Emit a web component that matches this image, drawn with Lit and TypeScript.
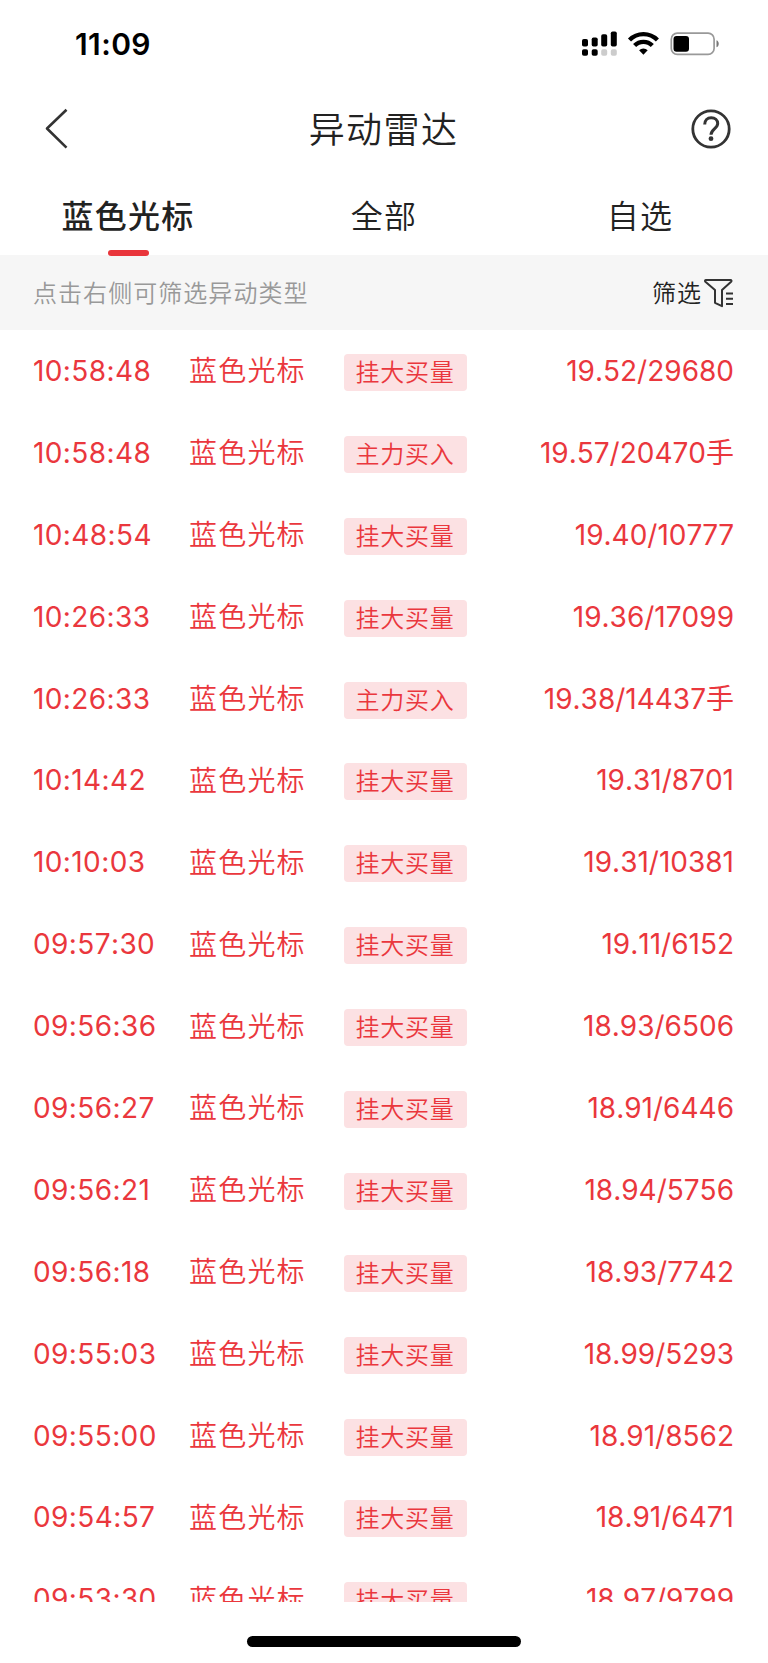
import { LitElement, html, css } from "lit";
import { customElement } from "lit/decorators.js";

type Row = [time: string, tag: string, value: string];

const STOCK = "蓝色光标";
const BID = "挂大买量";
const MAIN = "主力买入";

const ROWS: Row[] = [
  ["10:58:48", BID, "19.52/29680"],
  ["10:58:48", MAIN, "19.57/20470手"],
  ["10:48:54", BID, "19.40/10777"],
  ["10:26:33", BID, "19.36/17099"],
  ["10:26:33", MAIN, "19.38/14437手"],
  ["10:14:42", BID, "19.31/8701"],
  ["10:10:03", BID, "19.31/10381"],
  ["09:57:30", BID, "19.11/6152"],
  ["09:56:36", BID, "18.93/6506"],
  ["09:56:27", BID, "18.91/6446"],
  ["09:56:21", BID, "18.94/5756"],
  ["09:56:18", BID, "18.93/7742"],
  ["09:55:03", BID, "18.99/5293"],
  ["09:55:00", BID, "18.91/8562"],
  ["09:54:57", BID, "18.91/6471"],
  ["09:53:30", BID, "18.97/9799"],
];

@customElement("app-root")
export class AppRoot extends LitElement {
  static styles = css`
    :host {
      display: flex;
      flex-direction: column;
      width: 768px;
      height: 1663px;
      overflow: hidden;
      background: #fff;
      color: #222;
      font-family: Inter, "Noto Sans CJK SC", sans-serif;
      white-space: nowrap;
    }
    svg { display: block; flex: none; }
    .status {
      display: flex;
      justify-content: space-between;
      align-items: center;
      height: 88px;
      padding: 0 48px 0 75px;
      box-sizing: border-box;
      color: #000;
    }
    .clock { font-size: 30px; font-weight: 600; letter-spacing: 0.4px; }
    .nav {
      display: grid;
      grid-template-columns: 1fr auto 1fr;
      align-items: center;
      height: 82px;
      padding: 0 37px 2px 44px;
      box-sizing: border-box;
    }
    .title {
      font-size: 36px;
      font-weight: 350;
      letter-spacing: 1.4px;
      line-height: 80px;
      padding-top: 2px;
      margin: 0 3px 0 -5px;
    }
    .help { justify-self: end; }
    .tabs { display: grid; grid-template-columns: repeat(3, 1fr); height: 85px; }
    .tab {
      position: relative;
      text-align: center;
      font-size: 32px;
      font-weight: 350;
      letter-spacing: 1.3px;
      line-height: 94px;
    }
    .tab.active { font-weight: 500; }
    .active::after {
      content: "";
      position: absolute;
      left: 107.5px;
      top: 80px;
      width: 41px;
      height: 6px;
      border-radius: 3px;
      background: #e9353b;
    }
    .filter {
      display: flex;
      justify-content: space-between;
      align-items: center;
      flex: none;
      height: 75px;
      padding: 0 34px 2px 33px;
      box-sizing: border-box;
      background: #f6f6f6;
      font-size: 24px;
      font-weight: 350;
      letter-spacing: 1.05px;
    }
    .hint { color: #999; }
    .pick { display: flex; align-items: center; gap: 2px; }
    .pick svg { margin-top: 2px; }
    .list { height: 1272px; overflow: hidden; color: #ea373d; }
    .row {
      display: grid;
      grid-template-columns: 156px 155px 123px 1fr;
      align-items: center;
      height: 81.9px;
      padding: 0 34px 0 33px;
      font-size: 28px;
      line-height: 40px;
    }
    .time { letter-spacing: 0.4px; font-kerning: none; }
    .name { font-weight: 350; letter-spacing: 1.2px; padding-top: 1px; }
    .tag {
      height: 37px;
      margin-top: 3px;
      padding-right: 1px;
      box-sizing: border-box;
      border-radius: 4px;
      background: #fce1e3;
      text-align: center;
      font-size: 24px;
      font-weight: 350;
      line-height: 38px;
      letter-spacing: 0.8px;
    }
    .value { text-align: right; font-kerning: none; }
    .home { display: flex; justify-content: center; padding-top: 34px; }
    .bar { width: 274px; height: 10.5px; border-radius: 6px; background: #000; }
  `;

  render() {
    return html`
      <div class="status">
        <span class="clock">11:09</span>
        <svg width="138" height="26" viewBox="0 0 138 26">
          <rect x="0" y="8" width="6" height="7.5" rx="1.8" />
          <rect x="9.7" y="6.5" width="6" height="9" rx="1.8" />
          <rect x="19.2" y="3.3" width="6" height="12.2" rx="1.8" />
          <rect x="28.8" y="0.5" width="6" height="15" rx="1.8" />
          <rect x="0" y="18.3" width="6" height="6.5" rx="1.8" />
          <rect x="9.7" y="18.3" width="6" height="6.5" rx="1.8" />
          <rect x="19.2" y="18.3" width="6" height="6.5" rx="1.8" fill="#ccc" />
          <rect x="28.8" y="18.3" width="6" height="6.5" rx="1.8" fill="#ccc" />
          <g fill="none" stroke="#000" stroke-width="4.3">
            <path d="M47.5 9a19.5 19.5 0 0 1 27.9 0" />
            <path d="M52.6 14.6a12.3 12.3 0 0 1 17.7 0" />
          </g>
          <path d="M61.4 23.8l-4.3-4.5a6 6 0 0 1 8.6 0z" />
          <rect x="89.3" y="2.2" width="42.8" height="21.2" rx="6" fill="none" stroke="#999" stroke-width="1.7" />
          <rect x="91.5" y="5" width="15.5" height="15.8" rx="3" />
          <path d="M134.5 9.3c3 1 3 6 0 7z" fill="#777" />
        </svg>
      </div>
      <div class="nav">
        <svg width="24" height="42" viewBox="0 0 24 42" fill="none" stroke="#333" stroke-width="2.6">
          <path d="M22.5 1.8L3 20.5 22.5 39.6" stroke-linejoin="round" />
        </svg>
        <span class="title">异动雷达</span>
        <svg class="help" width="40" height="40" viewBox="0 0 40 40" fill="none" stroke="#333" stroke-width="2.8">
          <circle cx="20" cy="20" r="18.2" />
          <path d="M13.7 15.5c0-4.2 2.7-6.8 6.5-6.8s6.5 2.4 6.5 5.8c0 5-6.7 5.8-6.7 11.2" stroke-width="3" />
          <circle cx="20" cy="29.7" r="2.4" fill="#333" stroke="none" />
        </svg>
      </div>
      <div class="tabs">
        <span class="tab active">${STOCK}</span>
        <span class="tab">全部</span>
        <span class="tab">自选</span>
      </div>
      <div class="filter">
        <span class="hint">点击右侧可筛选异动类型</span>
        <span class="pick">
          筛选
          <svg width="30" height="30" viewBox="0 0 30 30" fill="none" stroke="#333" stroke-width="2">
            <path d="M2 2h24.5c1 0 1.3 1 .6 1.7L18 12v16.2l-7-3.4V12L1.4 3.7C.7 3 1 2 2 2z" stroke-linejoin="round" />
            <path d="M22 15.5h7M22 20.7h7M22 26h7" />
          </svg>
        </span>
      </div>
      <div class="list">
        ${ROWS.map(
          ([time, tag, value]) => html`
            <div class="row">
              <span class="time">${time}</span>
              <span class="name">${STOCK}</span>
              <span class="tag">${tag}</span>
              <span class="value">${value}</span>
            </div>
          `
        )}
      </div>
      <div class="home"><div class="bar"></div></div>
    `;
  }
}
